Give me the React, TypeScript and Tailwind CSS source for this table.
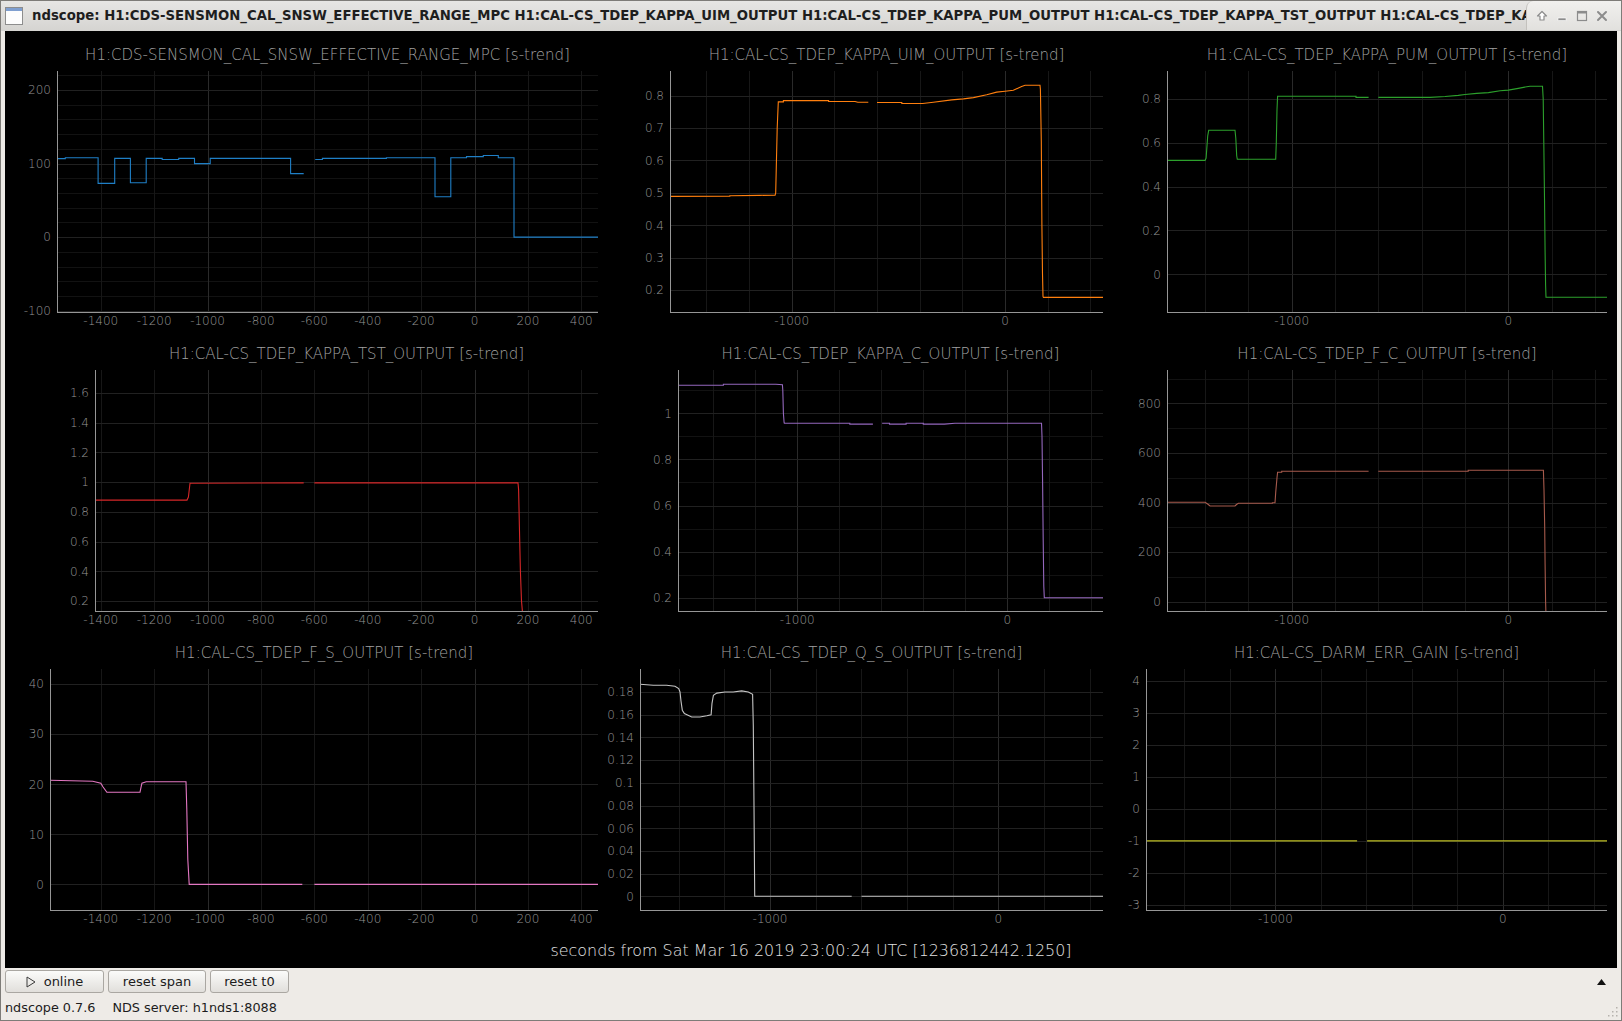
import React from "react";

type Pt = [number, number];

interface Plot {
  id: string;
  title: string;
  color: string;
  col: number;
  row: number;
  L: number;
  R: number;
  px: (d: number) => number;
  py: (v: number) => number;
  xLabels: number[];
  xLines: number[];
  yLabels: number[];
  yMinor: number[];
  pieces: Pt[][];
}

const COL_X = [5, 602, 1105];
const COL_W = [597, 503, 512];
const ROW_TOP = [40, 339, 638];
const FONT = "'DejaVu Sans', 'Liberation Sans', sans-serif";

const range = (a: number, b: number, s: number) => {
  const out: number[] = [];
  const n = Math.round((b - a) / s);
  for (let i = 0; i <= n; i++) out.push(Number((a + i * s).toFixed(4)));
  return out;
};

// linear map through two measured points
const lin = (d0: number, p0: number, d1: number, p1: number) => (d: number) =>
  p0 + ((d - d0) * (p1 - p0)) / (d1 - d0);

const fmt = (v: number) => String(parseFloat(v.toFixed(4)));

const col1X = lin(-1400, 100.8, 400, 581.3);
const wide = { xLabels: range(-1400, 400, 200), xLines: range(-1400, 400, 200) };
const narrow = { xLabels: [-1000, 0], xLines: range(-1400, 400, 200) };

const PLOTS: Plot[] = [
  {
    id: "p1",
    title: "H1:CDS-SENSMON_CAL_SNSW_EFFECTIVE_RANGE_MPC [s-trend]",
    color: "#1f7fc6",
    col: 0,
    row: 0,
    L: 57,
    R: 598,
    px: col1X,
    py: lin(200, 90, -100, 310.7),
    ...wide,
    yLabels: [-100, 0, 100, 200],
    yMinor: range(-80, 220, 20).filter((v) => v % 100 !== 0),
    pieces: [
      [
        [-1566, 106.8], [-1533, 106.8], [-1533, 108], [-1410, 108], [-1410, 73], [-1348, 73],
        [-1348, 107], [-1289, 107], [-1289, 74], [-1230, 74], [-1230, 107], [-1170, 107],
        [-1170, 105.5], [-1108, 105.5], [-1108, 107], [-1049, 107], [-1049, 100], [-990, 100],
        [-990, 107], [-689, 107], [-689, 86.4], [-640, 86.4],
      ],
      [
        [-597, 105.5], [-570, 105.5], [-570, 107], [-330, 107], [-330, 108], [-148, 108],
        [-148, 55], [-89, 55], [-89, 108], [-30, 108], [-30, 109.5], [33, 109.5], [33, 111],
        [89, 111], [89, 108], [148, 108], [148, 0], [465, 0],
      ],
    ],
  },
  {
    id: "p2",
    title: "H1:CAL-CS_TDEP_KAPPA_UIM_OUTPUT [s-trend]",
    color: "#ff7f0e",
    col: 1,
    row: 0,
    L: 670,
    R: 1103,
    px: lin(-1000, 791.7, 0, 1005),
    py: lin(0.8, 95.7, 0.2, 290),
    ...narrow,
    yLabels: range(0.2, 0.8, 0.1),
    yMinor: [],
    pieces: [
      [
        [-1575, 0.489], [-1290, 0.49], [-1290, 0.491], [-1150, 0.492], [-1078, 0.493],
        [-1075, 0.5], [-1072, 0.58], [-1068, 0.7], [-1066, 0.73], [-1063, 0.781], [-1039, 0.781],
        [-1039, 0.785], [-827, 0.785], [-827, 0.782], [-703, 0.782], [-690, 0.78], [-641, 0.78],
      ],
      [
        [-600, 0.779], [-484, 0.779], [-484, 0.776], [-386, 0.776], [-336, 0.78], [-250, 0.787],
        [-195, 0.79], [-148, 0.794], [-86, 0.803], [-39, 0.811], [0, 0.814], [39, 0.817],
        [78, 0.828], [94, 0.832], [164, 0.832], [166, 0.82], [170, 0.66], [173, 0.4],
        [176, 0.25], [178, 0.18], [180, 0.177], [465, 0.177],
      ],
    ],
  },
  {
    id: "p3",
    title: "H1:CAL-CS_TDEP_KAPPA_PUM_OUTPUT [s-trend]",
    color: "#2ca02c",
    col: 2,
    row: 0,
    L: 1167,
    R: 1607,
    px: lin(-1000, 1291.7, 0, 1508.3),
    py: lin(0.8, 98.7, 0, 274.3),
    ...narrow,
    yLabels: range(0, 0.8, 0.2),
    yMinor: [],
    pieces: [
      [
        [-1580, 0.519], [-1400, 0.519], [-1395, 0.53], [-1388, 0.63], [-1383, 0.656],
        [-1262, 0.656], [-1258, 0.62], [-1254, 0.54], [-1251, 0.524], [-1074, 0.524],
        [-1071, 0.6], [-1068, 0.75], [-1065, 0.811], [-703, 0.811], [-703, 0.806], [-645, 0.806],
      ],
      [
        [-600, 0.806], [-362, 0.806], [-292, 0.81], [-231, 0.815], [-200, 0.819], [-146, 0.824],
        [-92, 0.828], [-38, 0.836], [0, 0.839], [46, 0.847], [85, 0.854], [100, 0.857],
        [158, 0.857], [161, 0.8], [164, 0.6], [167, 0.35], [170, 0.1], [172, -0.05],
        [174, -0.105], [465, -0.105],
      ],
    ],
  },
  {
    id: "p4",
    title: "H1:CAL-CS_TDEP_KAPPA_TST_OUTPUT [s-trend]",
    color: "#d62728",
    col: 0,
    row: 1,
    L: 95,
    R: 598,
    px: col1X,
    py: lin(1.6, 393, 0.2, 601),
    ...wide,
    yLabels: range(0.2, 1.6, 0.2),
    yMinor: [],
    pieces: [
      [[-1425, 0.879], [-1077, 0.879], [-1072, 0.9], [-1066, 0.993], [-640, 0.995]],
      [[-600, 0.995], [163, 0.995], [165, 0.95], [168, 0.7], [172, 0.4], [176, 0.2], [181, 0.1]],
    ],
  },
  {
    id: "p5",
    title: "H1:CAL-CS_TDEP_KAPPA_C_OUTPUT [s-trend]",
    color: "#9467bd",
    col: 1,
    row: 1,
    L: 678,
    R: 1103,
    px: lin(-1000, 797.3, 0, 1007.3),
    py: lin(1, 413.3, 0.2, 597.7),
    ...narrow,
    yLabels: range(0.2, 1, 0.2),
    yMinor: [0.3, 0.5, 0.7, 0.9, 1.1],
    pieces: [
      [
        [-1575, 1.1215], [-1352, 1.1215], [-1352, 1.126], [-1102, 1.126], [-1071, 1.124],
        [-1069, 1.1], [-1066, 1.0], [-1063, 0.96], [-1062, 0.957], [-750, 0.957], [-750, 0.953],
        [-640, 0.953],
      ],
      [
        [-596, 0.957], [-561, 0.957], [-561, 0.953], [-482, 0.953], [-482, 0.957], [-400, 0.957],
        [-400, 0.953], [-300, 0.953], [-249, 0.957], [163, 0.957], [165, 0.9], [168, 0.7],
        [171, 0.45], [174, 0.25], [176, 0.2], [465, 0.2],
      ],
    ],
  },
  {
    id: "p6",
    title: "H1:CAL-CS_TDEP_F_C_OUTPUT [s-trend]",
    color: "#a65a4c",
    col: 2,
    row: 1,
    L: 1167,
    R: 1607,
    px: lin(-1000, 1291.7, 0, 1508.3),
    py: lin(800, 403.3, 0, 601.7),
    ...narrow,
    yLabels: range(0, 800, 200),
    yMinor: [100, 300, 500, 700, 900],
    pieces: [
      [
        [-1580, 400.7], [-1400, 400.7], [-1385, 392], [-1377, 386], [-1262, 386], [-1255, 392],
        [-1246, 396.6], [-1089, 396.6], [-1089, 399], [-1077, 399], [-1074, 440], [-1068, 500],
        [-1065, 521.7], [-1046, 521.7], [-1046, 525.7], [-645, 525.7],
      ],
      [
        [-600, 525.7], [-185, 525.7], [-185, 529.8], [162, 529.8], [165, 450], [168, 300],
        [170, 150], [172, 0], [174, -60],
      ],
    ],
  },
  {
    id: "p7",
    title: "H1:CAL-CS_TDEP_F_S_OUTPUT [s-trend]",
    color: "#e377c2",
    col: 0,
    row: 2,
    L: 50,
    R: 598,
    px: col1X,
    py: lin(40, 684, 0, 884.4),
    ...wide,
    yLabels: range(0, 40, 10),
    yMinor: [],
    pieces: [
      [
        [-1600, 20.8], [-1430, 20.6], [-1400, 20.2], [-1392, 19.5], [-1377, 18.4], [-1253, 18.4],
        [-1246, 20.2], [-1230, 20.5], [-1081, 20.5], [-1078, 15], [-1074, 5], [-1069, 0],
        [-645, 0],
      ],
      [[-600, 0], [467, 0]],
    ],
  },
  {
    id: "p8",
    title: "H1:CAL-CS_TDEP_Q_S_OUTPUT [s-trend]",
    color: "#c4c4c4",
    col: 1,
    row: 2,
    L: 640,
    R: 1103,
    px: lin(-1000, 770, 0, 998.3),
    py: lin(0.18, 692, 0, 896.3),
    ...narrow,
    yLabels: range(0, 0.18, 0.02),
    yMinor: [],
    pieces: [
      [
        [-1575, 0.187], [-1511, 0.186], [-1453, 0.186], [-1416, 0.185], [-1400, 0.183],
        [-1394, 0.18], [-1390, 0.172], [-1384, 0.164], [-1375, 0.161], [-1343, 0.158],
        [-1307, 0.158], [-1277, 0.159], [-1258, 0.16], [-1254, 0.17], [-1248, 0.177],
        [-1233, 0.179], [-1197, 0.18], [-1161, 0.18], [-1124, 0.181], [-1095, 0.18],
        [-1076, 0.178], [-1073, 0.15], [-1070, 0.08], [-1067, 0], [-642, 0],
      ],
      [[-599, 0], [465, 0]],
    ],
  },
  {
    id: "p9",
    title: "H1:CAL-CS_DARM_ERR_GAIN [s-trend]",
    color: "#bcbd22",
    col: 2,
    row: 2,
    L: 1146,
    R: 1607,
    px: lin(-1000, 1275.4, 0, 1502.9),
    py: lin(4, 680.7, -3, 905),
    ...narrow,
    yLabels: range(-3, 4, 1),
    yMinor: [],
    pieces: [
      [[-1580, -1], [-641, -1]],
      [[-597, -1], [465, -1]],
    ],
  },
];

const snap = (v: number) => Math.round(v) + 0.5;

function PlotCell({ p }: { p: Plot }) {
  const cx = COL_X[p.col];
  const cw = COL_W[p.col];
  const T = ROW_TOP[p.row] + 31;
  const B = T + 241;
  const clipId = `clip-${p.id}`;

  const hLine = (v: number, stroke: string, key: string) => {
    const y = snap(p.py(v));
    if (y < T || y > B) return null;
    return <line key={key} x1={p.L} x2={p.R} y1={y} y2={y} stroke={stroke} />;
  };

  return (
    <div className="flex flex-col">
      <div
        className="flex h-[31px] items-center justify-center whitespace-nowrap text-[15px] font-extralight text-[#a2a2a2]"
        style={{ paddingLeft: p.L - cx, paddingRight: cx + cw - p.R }}
      >
        {p.title}
      </div>
      <svg width={cw} height={268} viewBox={`${cx} ${T} ${cw} 268`} className="block">
        <defs>
          <clipPath id={clipId}>
            <rect x={p.L} y={T} width={p.R - p.L} height={241} />
          </clipPath>
        </defs>
        <g shapeRendering="crispEdges" strokeWidth={1}>
          {p.yMinor.map((v) => hLine(v, "#121212", `m${v}`))}
          {p.xLines.map((d) => {
            const x = snap(p.px(d));
            if (x <= p.L || x > p.R) return null;
            const major = d === -1000 || d === 0;
            return (
              <line key={`x${d}`} x1={x} x2={x} y1={T} y2={B} stroke={major ? "#2a2a2a" : "#171717"} />
            );
          })}
          {p.yLabels.map((v) => hLine(v, "#212121", `y${v}`))}
        </g>
        <g clipPath={`url(#${clipId})`} fill="none" stroke={p.color} strokeWidth={1.1} strokeLinejoin="miter">
          {p.pieces.map((piece, i) => (
            <path
              key={i}
              d={piece
                .map((pt, j) => `${j ? "L" : "M"}${p.px(pt[0]).toFixed(1)} ${p.py(pt[1]).toFixed(1)}`)
                .join(" ")}
            />
          ))}
        </g>
        <g shapeRendering="crispEdges" stroke="#969696" strokeWidth={1}>
          <line x1={p.L + 0.5} x2={p.L + 0.5} y1={T} y2={B + 1} />
          <line x1={p.L} x2={p.R} y1={B + 0.5} y2={B + 0.5} />
        </g>
        <g fill="#969696" fontFamily={FONT} fontSize={12} fontWeight={200}>
          {p.yLabels.map((v) => (
            <text key={`ty${v}`} x={p.L - 6} y={p.py(v) + 4.3} textAnchor="end">
              {fmt(v)}
            </text>
          ))}
          {p.xLabels.map((d) => (
            <text key={`tx${d}`} x={p.px(d)} y={B + 13} textAnchor="middle">
              {fmt(d)}
            </text>
          ))}
        </g>
      </svg>
    </div>
  );
}

function TitleBar() {
  return (
    <div className="relative flex h-[30px] shrink-0 items-center bg-gradient-to-b from-[#e7e6e4] to-[#d5d4d1]">
      {/* window icon */}
      <svg width="18" height="18" viewBox="0 0 18 18" className="ml-[4px] shrink-0">
        <rect x="0.5" y="0.5" width="17" height="17" fill="#fdfdfd" stroke="#8d8d8d" />
        <rect x="1" y="1" width="16" height="3" fill="#7f9fd0" />
      </svg>
      <div className="ml-[9px] min-w-0 overflow-hidden whitespace-nowrap pr-[95px] text-[13.25px] font-bold text-[#1e1e1e]">
        ndscope: H1:CDS-SENSMON_CAL_SNSW_EFFECTIVE_RANGE_MPC H1:CAL-CS_TDEP_KAPPA_UIM_OUTPUT
        H1:CAL-CS_TDEP_KAPPA_PUM_OUTPUT H1:CAL-CS_TDEP_KAPPA_TST_OUTPUT H1:CAL-CS_TDEP_KAPPA_C_OUTPUT
      </div>
      {/* window buttons */}
      <div className="absolute right-0 top-0 flex h-[29px] w-[95px] items-center gap-[8px] rounded-tl-[7px] border-l border-[#c3c1bd] bg-gradient-to-b from-[#f1f0ee] to-[#e2e1de] pl-[9px]">
        <svg width="12" height="12" viewBox="0 0 12 12">
          <path d="M6 1.5 L10.5 6 H8 V10 H4 V6 H1.5 Z" fill="#ffffff" stroke="#8c8c8c" strokeWidth="1.2" strokeLinejoin="round" />
        </svg>
        <svg width="12" height="12" viewBox="0 0 12 12">
          <rect x="2" y="8" width="8" height="2.5" fill="#8c8c8c" stroke="#ffffff" strokeWidth="0.6" />
        </svg>
        <svg width="12" height="12" viewBox="0 0 12 12">
          <rect x="1.5" y="1.5" width="9" height="9" fill="none" stroke="#8c8c8c" strokeWidth="1.2" />
          <rect x="1.5" y="1.5" width="9" height="2" fill="#8c8c8c" />
        </svg>
        <svg width="12" height="12" viewBox="0 0 12 12">
          <path d="M2 2 L10 10 M10 2 L2 10" stroke="#8c8c8c" strokeWidth="2" strokeLinecap="round" />
        </svg>
      </div>
    </div>
  );
}

function Button({ w, children }: { w: string; children: React.ReactNode }) {
  return (
    <button
      className={`flex h-[23px] items-center justify-center gap-[8px] rounded-[3px] border border-[#aaa7a2] bg-gradient-to-b from-[#fbfbfa] to-[#e1dfdb] text-[13px] text-[#1c1c1c] ${w}`}
    >
      {children}
    </button>
  );
}

export default function App() {
  return (
    <div className="relative flex h-[1021px] w-[1622px] flex-col overflow-hidden border border-[#7e7c78] bg-[#eeebe7] font-['DejaVu_Sans','Liberation_Sans',sans-serif]">
      <TitleBar />
      <div className="mx-[4px] flex h-[937px] shrink-0 flex-col bg-black pt-[9px]">
        <div className="grid grid-cols-[597px_503px_512px] grid-rows-[299px_299px_299px]">
          {PLOTS.map((p) => (
            <PlotCell key={p.id} p={p} />
          ))}
        </div>
        <div className="flex h-[31px] items-center justify-center pb-[3px] text-[15.9px] font-extralight text-[#e2e2e2]">
          seconds from Sat Mar 16 2019 23:00:24 UTC [1236812442.1250]
        </div>
      </div>
      <div className="mt-[2px] flex h-[23px] shrink-0 items-center gap-[4px] pl-[4px]">
        <Button w="w-[99px]">
          <svg width="10" height="12" viewBox="0 0 10 12">
            <path d="M1 1 L9 6 L1 11 Z" fill="none" stroke="#3a3a3a" strokeWidth="1" strokeLinejoin="round" />
          </svg>
          <span>online</span>
        </Button>
        <Button w="w-[98px]">reset span</Button>
        <Button w="w-[79px]">reset t0</Button>
        <svg width="9" height="6" viewBox="0 0 9 6" className="ml-auto mr-[15px]">
          <path d="M0 6 L4.5 0 L9 6 Z" fill="#111111" />
        </svg>
      </div>
      <div className="mt-[7px] flex h-[16px] shrink-0 items-center pl-[4px] text-[12.8px] text-[#1c1c1c]">
        <span>ndscope 0.7.6</span>
        <span className="ml-[17px]">NDS server: h1nds1:8088</span>
      </div>
      {/* resize grip */}
      <svg width="12" height="12" viewBox="0 0 12 12" className="absolute bottom-[2px] right-[2px]">
        {[
          [10, 2], [10, 6], [10, 10], [6, 6], [6, 10], [2, 10],
        ].map(([x, y]) => (
          <rect key={`${x}-${y}`} x={x - 1} y={y - 1} width="1.5" height="1.5" fill="#b5b2ad" />
        ))}
      </svg>
    </div>
  );
}
